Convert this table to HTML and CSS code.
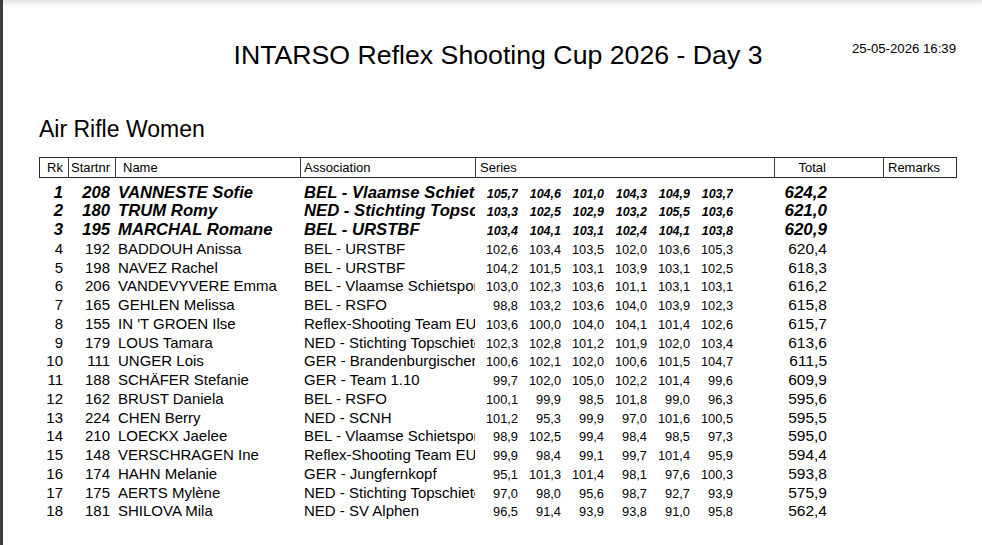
FILE: index.html
```html
<!DOCTYPE html>
<html lang="en">
<head>
<meta charset="utf-8">
<title>INTARSO Reflex Shooting Cup 2026 - Day 3</title>
<link rel="stylesheet" href="styles.css">
</head>
<body>
<div class="viewer">
  <div class="strip"></div>
  <div class="page">
    <header class="head">
      <div class="head-spacer"></div>
      <h1 class="title">INTARSO Reflex Shooting Cup 2026 - Day 3</h1>
      <div class="date">25-05-2026 16:39</div>
    </header>
    <h2 class="event">Air Rifle Women</h2>
    <div class="results">
      <div class="thead">
        <div class="th th-rk">Rk</div>
        <div class="th th-st">Startnr</div>
        <div class="th th-name">Name</div>
        <div class="th th-assoc">Association</div>
        <div class="th th-series">Series</div>
        <div class="th th-total">Total</div>
        <div class="th th-rem">Remarks</div>
      </div>
      <div class="rows">
        <div class="row medal"><div class="c rk">1</div><div class="c st">208</div><div class="c name">VANNESTE Sofie</div><div class="c assoc">BEL - Vlaamse Schietsportfederatie</div><div class="c s">105,7</div><div class="c s">104,6</div><div class="c s">101,0</div><div class="c s">104,3</div><div class="c s">104,9</div><div class="c s">103,7</div><div class="c gap"></div><div class="c total">624,2</div><div class="c rem"></div></div>
        <div class="row medal"><div class="c rk">2</div><div class="c st">180</div><div class="c name">TRUM Romy</div><div class="c assoc">NED - Stichting Topschieten</div><div class="c s">103,3</div><div class="c s">102,5</div><div class="c s">102,9</div><div class="c s">103,2</div><div class="c s">105,5</div><div class="c s">103,6</div><div class="c gap"></div><div class="c total">621,0</div><div class="c rem"></div></div>
        <div class="row medal"><div class="c rk">3</div><div class="c st">195</div><div class="c name">MARCHAL Romane</div><div class="c assoc">BEL - URSTBF</div><div class="c s">103,4</div><div class="c s">104,1</div><div class="c s">103,1</div><div class="c s">102,4</div><div class="c s">104,1</div><div class="c s">103,8</div><div class="c gap"></div><div class="c total">620,9</div><div class="c rem"></div></div>
        <div class="row"><div class="c rk">4</div><div class="c st">192</div><div class="c name">BADDOUH Anissa</div><div class="c assoc">BEL - URSTBF</div><div class="c s">102,6</div><div class="c s">103,4</div><div class="c s">103,5</div><div class="c s">102,0</div><div class="c s">103,6</div><div class="c s">105,3</div><div class="c gap"></div><div class="c total">620,4</div><div class="c rem"></div></div>
        <div class="row"><div class="c rk">5</div><div class="c st">198</div><div class="c name">NAVEZ Rachel</div><div class="c assoc">BEL - URSTBF</div><div class="c s">104,2</div><div class="c s">101,5</div><div class="c s">103,1</div><div class="c s">103,9</div><div class="c s">103,1</div><div class="c s">102,5</div><div class="c gap"></div><div class="c total">618,3</div><div class="c rem"></div></div>
        <div class="row"><div class="c rk">6</div><div class="c st">206</div><div class="c name">VANDEVYVERE Emma</div><div class="c assoc">BEL - Vlaamse Schietsportfederatie</div><div class="c s">103,0</div><div class="c s">102,3</div><div class="c s">103,6</div><div class="c s">101,1</div><div class="c s">103,1</div><div class="c s">103,1</div><div class="c gap"></div><div class="c total">616,2</div><div class="c rem"></div></div>
        <div class="row"><div class="c rk">7</div><div class="c st">165</div><div class="c name">GEHLEN Melissa</div><div class="c assoc">BEL - RSFO</div><div class="c s">98,8</div><div class="c s">103,2</div><div class="c s">103,6</div><div class="c s">104,0</div><div class="c s">103,9</div><div class="c s">102,3</div><div class="c gap"></div><div class="c total">615,8</div><div class="c rem"></div></div>
        <div class="row"><div class="c rk">8</div><div class="c st">155</div><div class="c name">IN 'T GROEN Ilse</div><div class="c assoc">Reflex-Shooting Team EU</div><div class="c s">103,6</div><div class="c s">100,0</div><div class="c s">104,0</div><div class="c s">104,1</div><div class="c s">101,4</div><div class="c s">102,6</div><div class="c gap"></div><div class="c total">615,7</div><div class="c rem"></div></div>
        <div class="row"><div class="c rk">9</div><div class="c st">179</div><div class="c name">LOUS Tamara</div><div class="c assoc">NED - Stichting Topschieten</div><div class="c s">102,3</div><div class="c s">102,8</div><div class="c s">101,2</div><div class="c s">101,9</div><div class="c s">102,0</div><div class="c s">103,4</div><div class="c gap"></div><div class="c total">613,6</div><div class="c rem"></div></div>
        <div class="row"><div class="c rk">10</div><div class="c st">111</div><div class="c name">UNGER Lois</div><div class="c assoc">GER - Brandenburgischer Schützenbund</div><div class="c s">100,6</div><div class="c s">102,1</div><div class="c s">102,0</div><div class="c s">100,6</div><div class="c s">101,5</div><div class="c s">104,7</div><div class="c gap"></div><div class="c total">611,5</div><div class="c rem"></div></div>
        <div class="row"><div class="c rk">11</div><div class="c st">188</div><div class="c name">SCHÄFER Stefanie</div><div class="c assoc">GER - Team 1.10</div><div class="c s">99,7</div><div class="c s">102,0</div><div class="c s">105,0</div><div class="c s">102,2</div><div class="c s">101,4</div><div class="c s">99,6</div><div class="c gap"></div><div class="c total">609,9</div><div class="c rem"></div></div>
        <div class="row"><div class="c rk">12</div><div class="c st">162</div><div class="c name">BRUST Daniela</div><div class="c assoc">BEL - RSFO</div><div class="c s">100,1</div><div class="c s">99,9</div><div class="c s">98,5</div><div class="c s">101,8</div><div class="c s">99,0</div><div class="c s">96,3</div><div class="c gap"></div><div class="c total">595,6</div><div class="c rem"></div></div>
        <div class="row"><div class="c rk">13</div><div class="c st">224</div><div class="c name">CHEN Berry</div><div class="c assoc">NED - SCNH</div><div class="c s">101,2</div><div class="c s">95,3</div><div class="c s">99,9</div><div class="c s">97,0</div><div class="c s">101,6</div><div class="c s">100,5</div><div class="c gap"></div><div class="c total">595,5</div><div class="c rem"></div></div>
        <div class="row"><div class="c rk">14</div><div class="c st">210</div><div class="c name">LOECKX Jaelee</div><div class="c assoc">BEL - Vlaamse Schietsportfederatie</div><div class="c s">98,9</div><div class="c s">102,5</div><div class="c s">99,4</div><div class="c s">98,4</div><div class="c s">98,5</div><div class="c s">97,3</div><div class="c gap"></div><div class="c total">595,0</div><div class="c rem"></div></div>
        <div class="row"><div class="c rk">15</div><div class="c st">148</div><div class="c name">VERSCHRAGEN Ine</div><div class="c assoc">Reflex-Shooting Team EU</div><div class="c s">99,9</div><div class="c s">98,4</div><div class="c s">99,1</div><div class="c s">99,7</div><div class="c s">101,4</div><div class="c s">95,9</div><div class="c gap"></div><div class="c total">594,4</div><div class="c rem"></div></div>
        <div class="row"><div class="c rk">16</div><div class="c st">174</div><div class="c name">HAHN Melanie</div><div class="c assoc">GER - Jungfernkopf</div><div class="c s">95,1</div><div class="c s">101,3</div><div class="c s">101,4</div><div class="c s">98,1</div><div class="c s">97,6</div><div class="c s">100,3</div><div class="c gap"></div><div class="c total">593,8</div><div class="c rem"></div></div>
        <div class="row"><div class="c rk">17</div><div class="c st">175</div><div class="c name">AERTS Mylène</div><div class="c assoc">NED - Stichting Topschieten</div><div class="c s">97,0</div><div class="c s">98,0</div><div class="c s">95,6</div><div class="c s">98,7</div><div class="c s">92,7</div><div class="c s">93,9</div><div class="c gap"></div><div class="c total">575,9</div><div class="c rem"></div></div>
        <div class="row"><div class="c rk">18</div><div class="c st">181</div><div class="c name">SHILOVA Mila</div><div class="c assoc">NED - SV Alphen</div><div class="c s">96,5</div><div class="c s">91,4</div><div class="c s">93,9</div><div class="c s">93,8</div><div class="c s">91,0</div><div class="c s">95,8</div><div class="c gap"></div><div class="c total">562,4</div><div class="c rem"></div></div>
      </div>
    </div>
  </div>
</div>
</body>
</html>
```

FILE: styles.css
```css
* {
  box-sizing: border-box;
}

html, body {
  margin: 0;
  padding: 0;
  background: #ffffff;
}

body {
  font-family: "Liberation Sans", Arial, sans-serif;
  color: #000000;
  width: 982px;
  height: 545px;
  overflow: hidden;
}

.viewer {
  display: flex;
  height: 545px;
}

.strip {
  width: 3px;
  flex: 0 0 3px;
  background: #3c3c3c;
}

.page {
  flex: 1;
  padding: 40px 25px 0 36px;
  background: linear-gradient(to bottom, #e2e2e2 0, #f6f6f6 4px, #ffffff 7px);
}

.head {
  display: grid;
  grid-template-columns: 1fr auto 1fr;
  align-items: start;
}

.title {
  margin: 0;
  font-size: 26.7px;
  line-height: 30px;
  font-weight: normal;
  white-space: nowrap;
}

.date {
  justify-self: end;
  margin-top: 1px;
  margin-right: 1px;
  font-size: 13.2px;
  line-height: 16px;
  white-space: nowrap;
}

.event {
  margin: 45.5px 0 0 0;
  font-size: 23px;
  line-height: 27px;
  font-weight: normal;
}

.results {
  margin-top: 14.5px;
  width: 918px;
}

.thead {
  display: grid;
  grid-template-columns: 28px 47px 185px 175px 299px 109px 73px;
  height: 21px;
  border: 1px solid #2a2a2a;
  border-top-width: 1.5px;
  font-size: 13px;
  line-height: 19px;
}

.th {
  border-left: 1px solid #3a3a3a;
  white-space: nowrap;
  overflow: hidden;
}

.th-rk {
  border-left: 0;
  text-align: right;
  padding-right: 5px;
}

.th-st {
  text-align: right;
  padding-right: 5px;
}

.th-name {
  padding-left: 7px;
}

.th-assoc {
  padding-left: 3px;
}

.th-series {
  padding-left: 4px;
}

.th-total {
  text-align: right;
  padding-right: 57px;
}

.th-rem {
  padding-left: 4px;
}

.rows {
  margin-top: 5.5px;
}

.row {
  display: grid;
  grid-template-columns: 29px 47px 185px 175px repeat(6, 43px) 41px 109px 74px;
  align-items: baseline;
  height: 18.76px;
  font-size: 15px;
  line-height: 18px;
}

.c {
  white-space: nowrap;
  overflow: hidden;
}

.rk {
  text-align: right;
  padding-right: 5px;
}

.st {
  text-align: right;
  padding-right: 5px;
}

.name {
  padding-left: 3px;
}

.assoc {
  padding-left: 4px;
}

.s {
  text-align: right;
  font-size: 12.8px;
}

.total {
  text-align: right;
  padding-right: 56px;
  font-size: 15.5px;
}

.medal {
  font-weight: bold;
  font-style: italic;
  font-size: 16.7px;
}

.medal .s {
  font-size: 12.5px;
}

.medal .total {
  font-size: 17px;
}
```
